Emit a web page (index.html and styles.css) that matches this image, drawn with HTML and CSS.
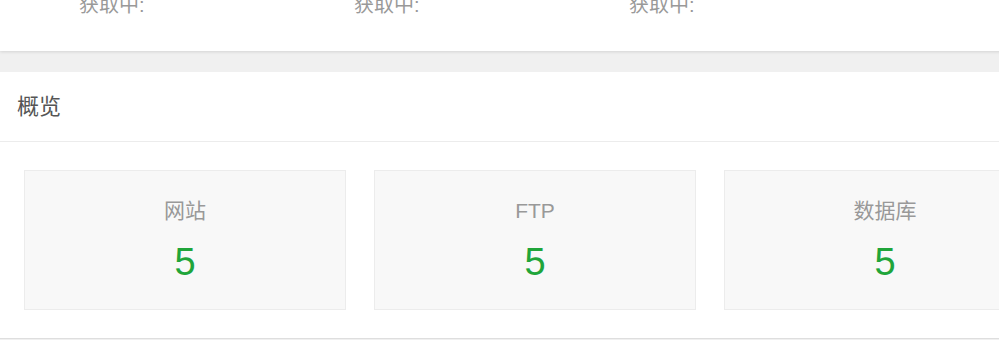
FILE: index.html
```html
<!DOCTYPE html>
<html lang="zh-CN">
<head>
<meta charset="utf-8">
<title>概览</title>
<link rel="stylesheet" href="styles.css">
</head>
<body>
<div class="page">
  <section class="status-panel">
    <div class="status-row">
      <div class="status-item">获取中:</div>
      <div class="status-item">获取中:</div>
      <div class="status-item">获取中:</div>
    </div>
  </section>
  <section class="overview">
    <div class="overview-title">概览</div>
    <div class="overview-cards">
      <div class="card">
        <div class="card-label">网站</div>
        <div class="card-value">5</div>
      </div>
      <div class="card">
        <div class="card-label">FTP</div>
        <div class="card-value">5</div>
      </div>
      <div class="card">
        <div class="card-label">数据库</div>
        <div class="card-value">5</div>
      </div>
    </div>
  </section>
</div>
</body>
</html>
```

FILE: styles.css
```css
html, body {
  margin: 0;
  padding: 0;
}
body {
  background: #f0f0f0;
  font-family: "Liberation Sans", "Noto Sans CJK SC", sans-serif;
  overflow: hidden;
}
.page {
  width: 1070px;
}
.status-panel {
  background: #fff;
  margin-top: -20px;
  height: 71px;
  box-shadow: 0 1px 3px rgba(0, 0, 0, 0.12);
  box-sizing: border-box;
  padding-top: 13px;
}
.status-row {
  display: grid;
  grid-template-columns: 275px 275px 275px;
  padding-left: 79px;
}
.status-item {
  font-size: 20px;
  line-height: 24px;
  color: #999;
}
.overview {
  margin-top: 21px;
  background: #fff;
  border-bottom: 1px solid #dedede;
}
.overview-title {
  height: 69px;
  line-height: 70px;
  padding-left: 17px;
  font-size: 22px;
  color: #555;
  border-bottom: 1px solid #ececec;
}
.overview-cards {
  display: flex;
  gap: 28px;
  padding: 28px 24px;
}
.card {
  flex: 0 0 322px;
  box-sizing: border-box;
  height: 140px;
  background: #f8f8f8;
  border: 1px solid #ececec;
  padding-top: 28px;
  text-align: center;
}
.card-label {
  font-size: 21px;
  line-height: 24px;
  color: #999;
}
.card-value {
  margin-top: 17px;
  font-size: 38px;
  line-height: 44px;
  color: #20a53a;
}
```
